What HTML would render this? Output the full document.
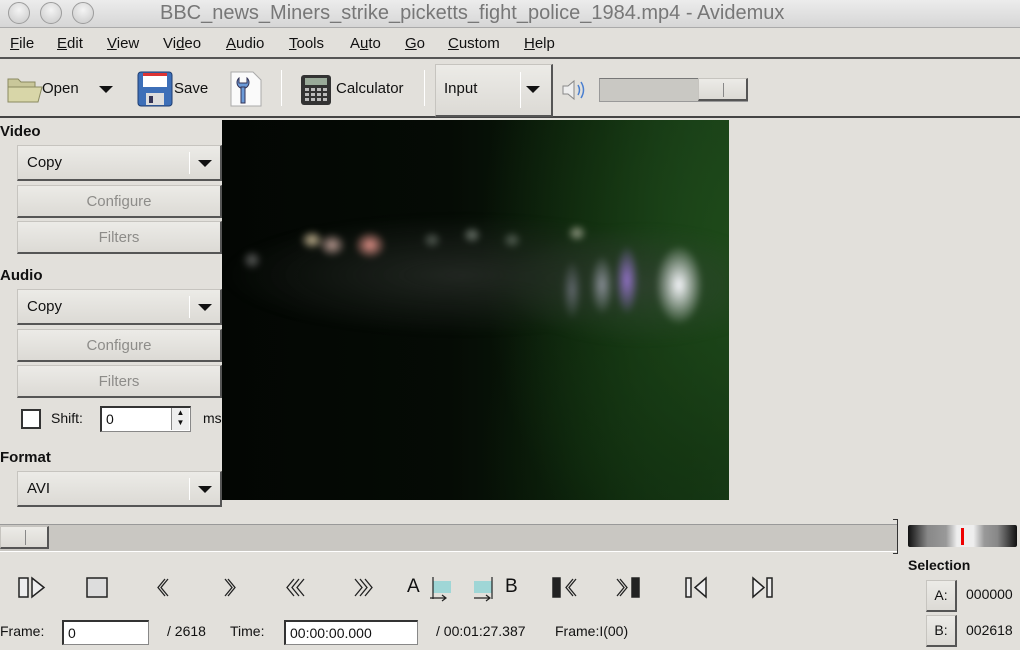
<!DOCTYPE html>
<html><head><meta charset="utf-8">
<style>
*{margin:0;padding:0;box-sizing:border-box}
body{width:1020px;height:650px;overflow:hidden;background:#e2e0db;font-family:"Liberation Sans",sans-serif;font-size:15px;color:#111;position:relative}
.a{position:absolute}
.title{left:0;top:0;width:1020px;height:28px;background:linear-gradient(#ececec,#d6d6d6);border-bottom:1px solid #aaa}
.dot{width:22px;height:22px;border-radius:50%;background:radial-gradient(circle at 50% 35%,#f4f4f4,#c8c8c8);border:1px solid #9c9c9c;top:2px}
.menu{top:28px;left:0;width:1020px;height:31px;background:#e2e0db;border-bottom:2px solid #555}
.menu span{position:absolute;top:7px;font-size:15px}
.tb{top:61px;left:0;width:1020px;height:57px;background:#e2e0db;border-bottom:2px solid #444}
.btn{background:linear-gradient(#ecebe7,#dcdad5);border:1px solid #c6c4bf;border-right:2px solid #555;border-bottom:2px solid #555}
.lbl{font-weight:bold;font-size:15px}
.combo{left:17px;width:205px;height:36px}
.combo .t{position:absolute;left:9px;top:8px;font-size:15px}
.combo .sep{position:absolute;right:30px;top:6px;width:1px;height:22px;background:#999;border-right:1px solid #fff}
.arrow{width:0;height:0;border-left:7px solid transparent;border-right:7px solid transparent;border-top:7px solid #111}
.combo .arrow{position:absolute;right:8px;top:14px}
.pb{left:17px;width:205px;height:33px;text-align:center;color:#8d8c89;font-size:15px;line-height:31px}
.field{background:#fff;border:1px solid #888;border-top:2px solid #333;border-left:2px solid #333;height:25px;font-size:14px;padding:3px 4px}
</style></head><body>
<div class="a title"></div>
<div class="a dot" style="left:8px"></div>
<div class="a dot" style="left:40px"></div>
<div class="a dot" style="left:72px"></div>
<div class="a" style="left:160px;top:2px;font-size:20px;color:#777">BBC_news_Miners_strike_picketts_fight_police_1984.mp4 - Avidemux</div>

<div class="a menu">
<span style="left:10px"><u>F</u>ile</span><span style="left:57px"><u>E</u>dit</span><span style="left:107px"><u>V</u>iew</span><span style="left:163px">Vi<u>d</u>eo</span><span style="left:226px"><u>A</u>udio</span><span style="left:289px"><u>T</u>ools</span><span style="left:350px">A<u>u</u>to</span><span style="left:405px"><u>G</u>o</span><span style="left:448px"><u>C</u>ustom</span><span style="left:524px"><u>H</u>elp</span>
</div>

<div class="a tb"></div>
<svg class="a" style="left:7px;top:75px" width="36" height="30"><path d="M1 4h10l3 3h14v20H1z" fill="#c9c79a" stroke="#8a8a60"/><path d="M1 12h34l-4 15H1z" fill="#d8d6a8" stroke="#8a8a60"/></svg>
<div class="a" style="left:42px;top:80px">Open</div>
<div class="a arrow" style="left:99px;top:86px"></div>
<svg class="a" style="left:137px;top:71px" width="36" height="36"><rect x="1" y="1" width="34" height="34" rx="3" fill="#3d6fb8" stroke="#1e3d70"/><rect x="6" y="2" width="24" height="14" fill="#fff"/><rect x="6" y="2" width="24" height="3" fill="#d33"/><rect x="9" y="22" width="18" height="12" fill="#ddd"/><rect x="12" y="25" width="4" height="7" fill="#335"/></svg>
<div class="a" style="left:174px;top:80px">Save</div>
<svg class="a" style="left:229px;top:70px" width="34" height="38"><path d="M2 2h22l8 8v26H2z" fill="#fafafa" stroke="#aaa"/><path d="M10 8a6 6 0 1 0 8 0v5h-8z" fill="#6b9ad8" stroke="#335"/><rect x="12" y="17" width="4" height="16" fill="#6b9ad8" stroke="#335"/></svg>
<div class="a" style="left:281px;top:70px;width:1px;height:36px;background:#aaa;border-right:1px solid #fff"></div>
<svg class="a" style="left:300px;top:74px" width="32" height="32"><rect x="1" y="1" width="30" height="30" rx="3" fill="#333"/><rect x="5" y="4" width="22" height="7" fill="#9a9" /><g fill="#bbb"><rect x="5" y="14" width="4" height="3"/><rect x="11" y="14" width="4" height="3"/><rect x="17" y="14" width="4" height="3"/><rect x="23" y="14" width="4" height="3"/><rect x="5" y="19" width="4" height="3"/><rect x="11" y="19" width="4" height="3"/><rect x="17" y="19" width="4" height="3"/><rect x="23" y="19" width="4" height="3"/><rect x="5" y="24" width="4" height="3"/><rect x="11" y="24" width="4" height="3"/><rect x="17" y="24" width="4" height="3"/><rect x="23" y="24" width="4" height="3"/></g></svg>
<div class="a" style="left:336px;top:80px">Calculator</div>
<div class="a" style="left:424px;top:70px;width:1px;height:36px;background:#aaa;border-right:1px solid #fff"></div>
<div class="a btn" style="left:435px;top:64px;width:118px;height:53px"></div>
<div class="a" style="left:444px;top:80px">Input</div>
<div class="a" style="left:520px;top:72px;width:1px;height:36px;background:#999;border-right:1px solid #fff"></div>
<div class="a arrow" style="left:526px;top:86px"></div>
<svg class="a" style="left:560px;top:78px" width="28" height="24"><path d="M3 8h5l6-5v18l-6-5H3z" fill="#eee" stroke="#888"/><path d="M18 7q3 5 0 10M21 4q5 8 0 16" fill="none" stroke="#4a7fd0" stroke-width="1.5"/></svg>
<div class="a" style="left:599px;top:78px;width:149px;height:24px;background:#c9c8c3;border:1px solid #999;border-top:1px solid #777"></div>
<div class="a btn" style="left:698px;top:78px;width:50px;height:23px"></div>
<div class="a" style="left:723px;top:83px;width:1px;height:14px;background:#888"></div>

<div class="a lbl" style="left:0;top:123px">Video</div>
<div class="a btn combo" style="top:145px"><span class="t">Copy</span><span class="sep"></span><span class="arrow"></span></div>
<div class="a btn pb" style="top:185px">Configure</div>
<div class="a btn pb" style="top:221px">Filters</div>
<div class="a lbl" style="left:0;top:267px">Audio</div>
<div class="a btn combo" style="top:289px"><span class="t">Copy</span><span class="sep"></span><span class="arrow"></span></div>
<div class="a btn pb" style="top:329px">Configure</div>
<div class="a btn pb" style="top:365px">Filters</div>
<div class="a" style="left:21px;top:409px;width:20px;height:20px;background:#fff;border:2px solid #333"></div>
<div class="a" style="left:51px;top:410px;font-size:14px">Shift:</div>
<div class="a field" style="left:100px;top:406px;width:91px;height:26px">0</div>
<div class="a" style="left:171px;top:408px;width:18px;height:22px;border-left:1px solid #888;background:#eee;font-size:8px;text-align:center;line-height:10px">▲<br>▼</div>
<div class="a" style="left:203px;top:410px;font-size:14px">ms</div>
<div class="a lbl" style="left:0;top:449px">Format</div>
<div class="a btn combo" style="top:471px"><span class="t">AVI</span><span class="sep"></span><span class="arrow"></span></div>

<!-- video -->
<div class="a" style="left:222px;top:120px;width:507px;height:380px;overflow:hidden;background:
radial-gradient(ellipse 260px 380px at 520px 120px,#1e4a19,transparent),
radial-gradient(ellipse 200px 220px at 460px 330px,#0f2a0e,transparent),
linear-gradient(90deg,#030603 0%,#050b05 45%,#0b1f0a 75%,#17391a 100%)">
<div class="a" style="left:0;top:95px;width:507px;height:140px;filter:blur(3px);background:
radial-gradient(ellipse 12px 10px at 90px 25px,rgba(230,210,170,.85),transparent),
radial-gradient(ellipse 14px 12px at 110px 30px,rgba(230,190,180,.8),transparent),
radial-gradient(ellipse 16px 14px at 148px 30px,rgba(250,160,150,.9),transparent),
radial-gradient(ellipse 10px 10px at 30px 45px,rgba(150,150,150,.6),transparent),
radial-gradient(ellipse 10px 9px at 250px 20px,rgba(170,180,170,.6),transparent),
radial-gradient(ellipse 10px 9px at 210px 25px,rgba(150,160,150,.5),transparent),
radial-gradient(ellipse 10px 9px at 290px 25px,rgba(150,160,150,.5),transparent),
radial-gradient(ellipse 10px 9px at 355px 18px,rgba(200,200,180,.7),transparent),
radial-gradient(ellipse 12px 35px at 405px 65px,rgba(160,120,220,.9),transparent),
radial-gradient(ellipse 12px 30px at 380px 70px,rgba(180,180,200,.7),transparent),
radial-gradient(ellipse 24px 40px at 457px 70px,rgba(250,250,255,1),transparent),
radial-gradient(ellipse 10px 30px at 350px 75px,rgba(140,140,160,.6),transparent),
radial-gradient(ellipse 240px 60px at 240px 60px,rgba(40,45,40,.8),transparent),
radial-gradient(ellipse 140px 60px at 420px 70px,rgba(50,70,50,.8),transparent)"></div>
</div>

<div class="a" style="left:0;top:524px;width:897px;height:28px;background:#c9c7c2;border-top:1px solid #999;border-bottom:1px solid #fff"></div>
<div class="a btn" style="left:0;top:526px;width:49px;height:23px"></div>
<div class="a" style="left:25px;top:530px;width:1px;height:15px;background:#888"></div>
<div class="a" style="left:893px;top:519px;width:5px;height:35px;border:1px solid #333;border-left:none"></div>
<div class="a" style="left:908px;top:525px;width:109px;height:22px;border-radius:2px;background:linear-gradient(90deg,#111,#888 18%,#999 35%,#eee 45%,#eee 60%,#999 70%,#888 82%,#111)"></div>
<div class="a" style="left:961px;top:528px;width:3px;height:17px;background:#e00"></div>
<div class="a lbl" style="left:908px;top:557px;font-size:14px">Selection</div>
<div class="a btn" style="left:926px;top:580px;width:31px;height:32px;font-size:14px;text-align:center;line-height:28px">A:</div>
<div class="a" style="left:966px;top:586px;font-size:14px">000000</div>
<div class="a btn" style="left:926px;top:615px;width:31px;height:32px;font-size:14px;text-align:center;line-height:28px">B:</div>
<div class="a" style="left:966px;top:622px;font-size:14px">002618</div>

<svg class="a" style="left:0;top:570px" width="800" height="36" fill="none" stroke="#222" stroke-width="1.5">
<rect x="19" y="8" width="9" height="19" fill="#eee"/><path d="M32 8l12 9.5-12 9.5z" fill="#eee"/>
<rect x="87" y="8" width="20" height="19" fill="#ddd"/>
<path d="M165 9l-7 8.5 7 8.5M168 9l-7 8.5 7 8.5" stroke-width="1.3"/>
<path d="M228 9l7 8.5-7 8.5M225 9l7 8.5-7 8.5" stroke-width="1.3"/>
<path d="M294 9l-7 8.5 7 8.5M299 9l-7 8.5 7 8.5M304 9l-7 8.5 7 8.5" stroke-width="1.3"/>
<path d="M355 9l7 8.5-7 8.5M360 9l7 8.5-7 8.5M365 9l7 8.5-7 8.5" stroke-width="1.3"/>
<rect x="433" y="11" width="18" height="12" fill="#9fd6d6" stroke="none"/><path d="M433 7v22M430 28h16M442 25l4 3-4 3" stroke-width="1.2"/>
<rect x="474" y="11" width="18" height="12" fill="#9fd6d6" stroke="none"/><path d="M492 7v22M474 28h16M486 25l4 3-4 3" stroke-width="1.2"/>
<rect x="553" y="8" width="7" height="19" fill="#222"/><path d="M573 9l-7 8.5 7 8.5M576 9l-7 8.5 7 8.5" stroke-width="1.3"/>
<rect x="632" y="8" width="7" height="19" fill="#222"/><path d="M620 9l7 8.5-7 8.5M617 9l7 8.5-7 8.5" stroke-width="1.3"/>
<rect x="686" y="8" width="5" height="19" fill="#eee"/><path d="M706 8l-11 9.5 11 9.5z" fill="#eee"/>
<rect x="767" y="8" width="5" height="19" fill="#eee"/><path d="M753 8l11 9.5-11 9.5z" fill="#eee"/>
</svg>
<div class="a" style="left:407px;top:576px;font-size:19px">A</div>
<div class="a" style="left:505px;top:576px;font-size:19px">B</div>

<div class="a" style="left:0;top:623px;font-size:14px">Frame:</div>
<div class="a field" style="left:62px;top:620px;width:87px">0</div>
<div class="a" style="left:167px;top:623px;font-size:14px">/ 2618</div>
<div class="a" style="left:230px;top:623px;font-size:14px">Time:</div>
<div class="a field" style="left:284px;top:620px;width:134px">00:00:00.000</div>
<div class="a" style="left:436px;top:623px;font-size:14px">/ 00:01:27.387</div>
<div class="a" style="left:555px;top:623px;font-size:14px">Frame:I(00)</div>
</body></html>
